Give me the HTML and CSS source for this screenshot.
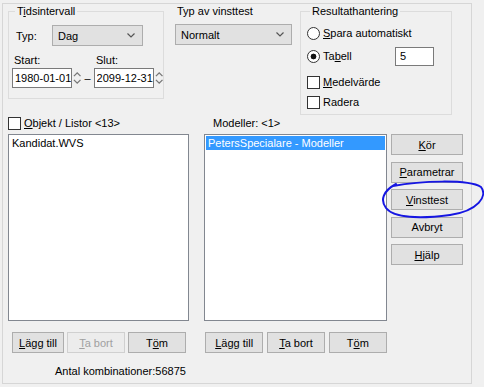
FILE: index.html
```html
<!DOCTYPE html>
<html lang="sv">
<head>
    <meta charset="UTF-8">
    <meta name="viewport" content="width=device-width, initial-scale=1.0">
    <title>Vinsttest</title>
    <link rel="stylesheet" href="styles.css">
</head>
<body>
    <div class="dialog">
        <div class="top">
            <!-- Tidsintervall -->
            <fieldset class="group time">
                <legend>T<u>i</u>dsintervall</legend>
                <div class="type-row">
                    <span class="type-label">Typ:</span>
                    <div class="combo combo-day">
                        <span>Dag</span>
                        <svg width="8" height="5" viewBox="0 0 8 5"><polyline points="0.5,0.5 4,4 7.5,0.5" fill="none" stroke="#555" stroke-width="1.2"/></svg>
                    </div>
                </div>
                <div class="date-labels">
                    <span class="start-label">Start:</span>
                    <span>Slut:</span>
                </div>
                <div class="date-row">
                    <input class="field date" type="text" value="1980-01-01">
                    <svg class="spin" width="9" height="18" viewBox="0 0 9 18"><polyline points="1,7 4.5,3.5 8,7" fill="none" stroke="#777" stroke-width="1.4"/><polyline points="1,11 4.5,14.5 8,11" fill="none" stroke="#777" stroke-width="1.4"/></svg>
                    <span class="dash">–</span>
                    <input class="field date" type="text" value="2099-12-31">
                    <svg class="spin" width="9" height="18" viewBox="0 0 9 18"><polyline points="1,7 4.5,3.5 8,7" fill="none" stroke="#777" stroke-width="1.4"/><polyline points="1,11 4.5,14.5 8,11" fill="none" stroke="#777" stroke-width="1.4"/></svg>
                </div>
            </fieldset>

            <!-- Typ av vinsttest -->
            <div class="testtype">
                <div class="testtype-label">Typ av vinsttest</div>
                <div class="combo combo-test">
                    <span>Normalt</span>
                    <svg width="8" height="5" viewBox="0 0 8 5"><polyline points="0.5,0.5 4,4 7.5,0.5" fill="none" stroke="#555" stroke-width="1.2"/></svg>
                </div>
            </div>

            <!-- Resultathantering -->
            <fieldset class="group result">
                <legend>Resultathantering</legend>
                <label class="opt first"><input type="radio" name="result"><u>S</u>para automatiskt</label>
                <div class="opt table-row">
                    <label class="opt-inline"><input type="radio" name="result" checked>Ta<u>b</u>ell</label>
                    <input class="field count-field" type="text" value="5">
                </div>
                <label class="opt mean"><input type="checkbox"><u>M</u>edelvärde</label>
                <label class="opt erase"><input type="checkbox">Radera</label>
            </fieldset>
        </div>

        <div class="lists">
            <div class="list-col objects">
                <label class="list-head"><input type="checkbox"><u>O</u>bjekt / Listor &lt;13&gt;</label>
                <div class="listbox">
                    <div class="item">Kandidat.WVS</div>
                </div>
                <div class="btn-row">
                    <button class="btn w52"><u>L</u>ägg till</button>
                    <button class="btn w58" disabled><u>T</u>a bort</button>
                    <button class="btn w58">T<u>ö</u>m</button>
                </div>
            </div>

            <div class="list-col models">
                <div class="list-head models-head">Modeller: &lt;1&gt;</div>
                <div class="listbox">
                    <div class="item selected">PetersSpecialare - Modeller</div>
                </div>
                <div class="btn-row">
                    <button class="btn w59"><u>L</u>ägg till</button>
                    <button class="btn w58"><u>T</u>a bort</button>
                    <button class="btn w59">T<u>ö</u>m</button>
                </div>
            </div>

            <div class="actions">
                <button class="btn"><u>K</u>ör</button>
                <button class="btn"><u>P</u>arametrar</button>
                <button class="btn"><u>V</u>insttest</button>
                <button class="btn">Avbryt</button>
                <button class="btn"><u>H</u>jälp</button>
            </div>
        </div>

        <div class="total">Antal kombinationer:56875</div>
    </div>

    <!-- hand drawn mark around Vinsttest -->
    <svg class="mark" width="484" height="387" viewBox="0 0 484 387">
        <path d="M 393 186 C 420 181, 468 179, 481 187 C 488 196, 478 211, 450 215 C 420 219, 394 218, 386 208 C 380 200, 383 191, 396 184" fill="none" stroke="#1616e2" stroke-width="2" stroke-linecap="round"/>
    </svg>
</body>
</html>
```

FILE: styles.css
```css
* {
    box-sizing: border-box;
}
body {
    margin: 0;
    width: 484px;
    height: 387px;
    overflow: hidden;
    position: relative;
    background-color: #f0f0f0;
    font-family: 'Liberation Sans', Arial, sans-serif;
    font-size: 11px;
    color: #000;
}
.dialog {
    margin: 3px 0 0 2px;
    width: 470px;
    height: 381px;
    border: 1px solid #d6d6d6;
    padding-left: 5px;
}
.top {
    display: flex;
    align-items: flex-start;
    height: 111px;
}
.group {
    margin: 1px 0 0 0;
    border: 1px solid #dcdcdc;
    min-inline-size: 0;
}
.group legend {
    padding: 0 2px;
    line-height: 13px;
}
.time {
    width: 156px;
    height: 94px;
    padding: 7px 0 0 3px;
}
.time legend {
    margin-left: 3px;
}
.type-row {
    display: flex;
    align-items: center;
    height: 21px;
    padding-left: 4px;
}
.type-label {
    width: 36px;
}
.combo {
    display: flex;
    align-items: center;
    justify-content: space-between;
    height: 21px;
    padding: 0 7px 0 5px;
    background-color: #e1e1e1;
    border: 1px solid #adadad;
}
.combo-day {
    width: 91px;
}
.date-labels {
    display: flex;
    height: 13px;
    line-height: 13px;
    margin-top: 8px;
    padding-left: 2px;
}
.start-label {
    width: 82px;
}
.date-row {
    display: flex;
    align-items: center;
    margin-top: 1px;
}
.field {
    height: 20px;
    border: 1px solid #7a7a7a;
    background-color: #fff;
    font-family: inherit;
    font-size: 11px;
    padding: 0 0 0 2px;
    color: #000;
    outline: none;
}
.date {
    width: 60px;
}
.spin {
    margin-left: 1px;
}
.dash {
    width: 13px;
    text-align: center;
}
.testtype {
    margin-left: 11px;
    padding-top: 1px;
}
.testtype-label {
    line-height: 13px;
    padding-left: 2px;
}
.combo-test {
    width: 117px;
    margin-top: 6px;
}
.result {
    width: 152px;
    height: 110px;
    margin-left: 8px;
    padding: 7px 0 0 6px;
}
.result legend {
    margin-left: 3px;
}
.opt {
    display: flex;
    align-items: center;
    height: 16px;
}
.opt-inline {
    display: flex;
    align-items: center;
    width: 88px;
}
.table-row {
    height: 20px;
    margin-top: 5px;
}
.count-field {
    width: 39px;
    height: 19px;
    padding-left: 4px;
}
.mean {
    margin-top: 8px;
}
.erase {
    margin-top: 4px;
}
input[type="radio"],
input[type="checkbox"] {
    appearance: none;
    -webkit-appearance: none;
    margin: 0 3px 0 0;
    width: 13px;
    height: 13px;
    border: 1px solid #333;
    background-color: #fff;
}
input[type="radio"] {
    border-radius: 50%;
}
input[type="radio"]:checked {
    background: radial-gradient(circle, #111 0, #111 2.6px, #fff 3.2px);
}
.lists {
    display: flex;
    align-items: flex-start;
}
.list-col {
    display: flex;
    flex-direction: column;
}
.objects {
    width: 181px;
}
.models {
    width: 183px;
    margin-left: 15px;
}
.list-head {
    display: flex;
    align-items: center;
    height: 16px;
}
.models-head {
    padding-left: 9px;
}
.listbox {
    height: 187px;
    margin-top: 3px;
    border: 1px solid #828790;
    background-color: #fff;
    padding: 1px;
}
.item {
    height: 14px;
    line-height: 14px;
    padding-left: 2px;
}
.item.selected {
    background-color: #3399ff;
    color: #fff;
}
.btn-row {
    display: flex;
    gap: 3px;
    margin-top: 11px;
}
.objects .btn-row {
    padding-left: 4px;
}
.models .btn-row {
    padding-left: 1px;
    gap: 4px;
}
.btn {
    height: 21px;
    padding: 0;
    background-color: #e1e1e1;
    border: 1px solid #adadad;
    font-family: inherit;
    font-size: 11px;
    color: #000;
}
.btn:disabled {
    background-color: #ececec;
    border-color: #d0d0d0;
    color: #a0a0a0;
}
.w52 {
    width: 52px;
}
.w58 {
    width: 58px;
}
.w59 {
    width: 59px;
}
.actions {
    display: flex;
    flex-direction: column;
    gap: 6.5px;
    margin: 19px 0 0 4px;
}
.actions .btn {
    width: 72px;
}
.total {
    margin-top: 12px;
    padding-left: 47px;
    line-height: 13px;
}
.mark {
    position: absolute;
    left: 0;
    top: 0;
    pointer-events: none;
}
```
